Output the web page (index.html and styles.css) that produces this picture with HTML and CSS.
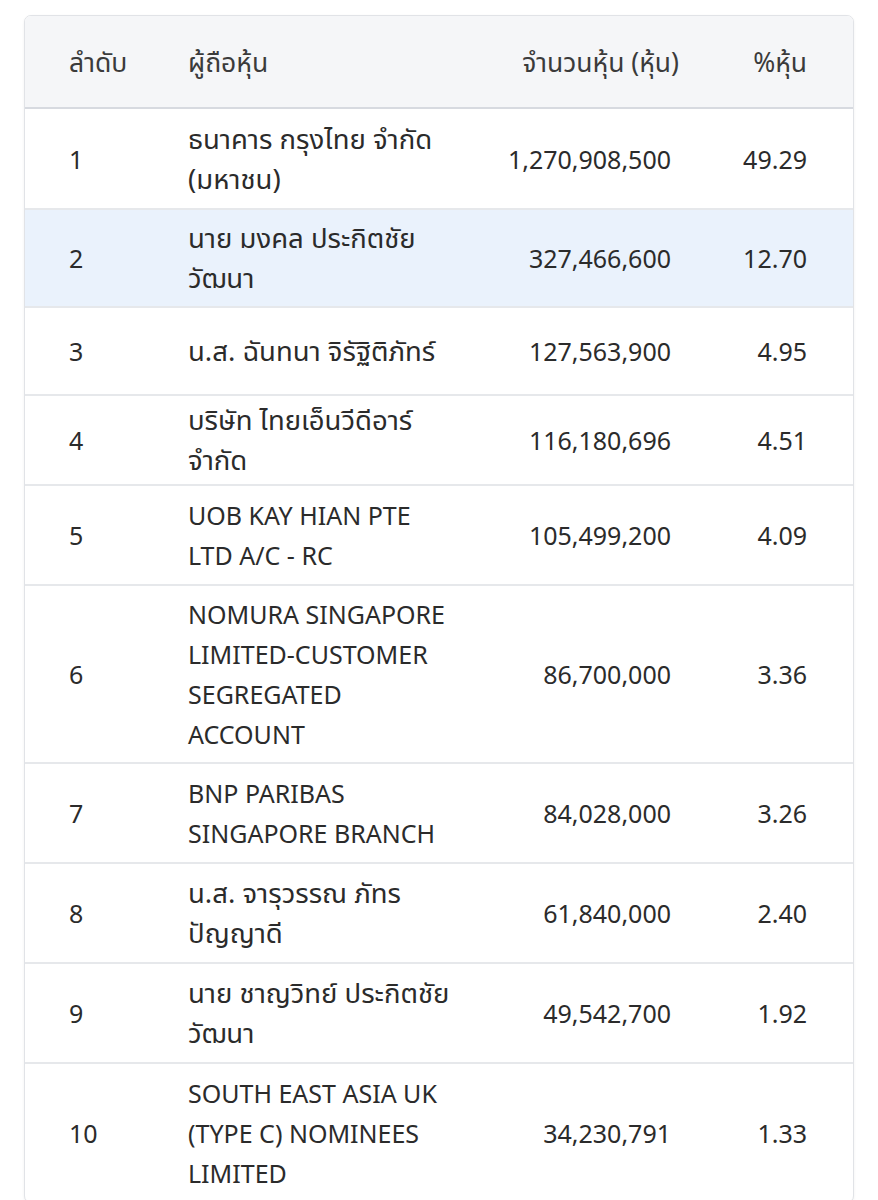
FILE: index.html
```html
<!DOCTYPE html>
<html lang="th">
<head>
<meta charset="utf-8">
<title>ผู้ถือหุ้น</title>
<link rel="stylesheet" href="styles.css">
</head>
<body>
<div class="card">
  <table class="holders">
    <colgroup>
      <col class="c-rank">
      <col class="c-name">
      <col class="c-shares">
      <col class="c-pct">
    </colgroup>
    <thead>
      <tr>
        <th class="rank">ลำดับ</th>
        <th class="name">ผู้ถือหุ้น</th>
        <th class="num shares">จำนวนหุ้น (หุ้น)</th>
        <th class="num pct">%หุ้น</th>
      </tr>
    </thead>
    <tbody>
      <tr class="roomy"><td class="rank">1</td><td class="name thai">ธนาคาร กรุงไทย จำกัด (มหาชน)</td><td class="num shares">1,270,908,500</td><td class="num pct">49.29</td></tr>
      <tr class="active snug"><td class="rank">2</td><td class="name thai">นาย มงคล ประกิตชัย วัฒนา</td><td class="num shares">327,466,600</td><td class="num pct">12.70</td></tr>
      <tr><td class="rank">3</td><td class="name thai">น.ส. ฉันทนา จิรัฐิติภัทร์</td><td class="num shares">127,563,900</td><td class="num pct">4.95</td></tr>
      <tr class="tight"><td class="rank">4</td><td class="name thai">บริษัท ไทยเอ็นวีดีอาร์ จำกัด</td><td class="num shares">116,180,696</td><td class="num pct">4.51</td></tr>
      <tr><td class="rank">5</td><td class="name">UOB KAY HIAN PTE LTD A/C - RC</td><td class="num shares">105,499,200</td><td class="num pct">4.09</td></tr>
      <tr class="snug"><td class="rank">6</td><td class="name">NOMURA SINGAPORE LIMITED-CUSTOMER SEGREGATED ACCOUNT</td><td class="num shares">86,700,000</td><td class="num pct">3.36</td></tr>
      <tr><td class="rank">7</td><td class="name">BNP PARIBAS SINGAPORE BRANCH</td><td class="num shares">84,028,000</td><td class="num pct">3.26</td></tr>
      <tr><td class="rank">8</td><td class="name thai">น.ส. จารุวรรณ ภัทร ปัญญาดี</td><td class="num shares">61,840,000</td><td class="num pct">2.40</td></tr>
      <tr><td class="rank">9</td><td class="name thai">นาย ชาญวิทย์ ประกิตชัย วัฒนา</td><td class="num shares">49,542,700</td><td class="num pct">1.92</td></tr>
      <tr><td class="rank">10</td><td class="name">SOUTH EAST ASIA UK (TYPE C) NOMINEES LIMITED</td><td class="num shares">34,230,791</td><td class="num pct">1.33</td></tr>
    </tbody>
  </table>
</div>
</body>
</html>
```

FILE: styles.css
```css
html, body {
  margin: 0;
  padding: 0;
  background: #ffffff;
}
body {
  padding: 15px 24px 0 24px;
  font-family: "Noto Sans", "Noto Sans Thai", "Open Sans", sans-serif;
  color: #2b2b2b;
}
.card {
  border: 1px solid #e1e3e7;
  border-radius: 7px;
  overflow: hidden;
  box-shadow: 0 1px 3px rgba(0, 0, 0, 0.06);
  background: #fff;
}
.holders {
  width: 100%;
  border-collapse: collapse;
  table-layout: fixed;
  font-size: 25px;
  line-height: 40px;
}
.c-rank { width: 139px; }
.c-name { width: 302px; }
.c-shares { width: 229px; }
.c-pct { width: auto; }

thead tr {
  height: 92px;
  background: #f5f6f8;
  border-bottom: 2px solid #d7dae0;
}
th {
  font-weight: 400;
  font-size: 26.5px;
  color: #3b3b3b;
  text-align: left;
  vertical-align: middle;
  padding: 0;
}
tbody tr {
  height: 88px;
  border-bottom: 2px solid #e6e8eb;
}
tbody tr:last-child { border-bottom: none; }
tbody tr.active { background: #eaf2fc; }
td {
  vertical-align: middle;
  padding: 0;
}
.thai { font-size: 27.5px; }
.rank { padding-left: 44px; }
.name { padding: 9px 16px 9px 24px; }
.roomy .name { padding-top: 10px; padding-bottom: 9px; }
.snug .name { padding-top: 8px; padding-bottom: 8px; }
.tight .name { padding-top: 4px; padding-bottom: 4px; }
.num { text-align: right; }
td.shares { padding-right: 24px; }
th.shares { padding-right: 16px; }
.pct { padding-right: 46px; }
```
